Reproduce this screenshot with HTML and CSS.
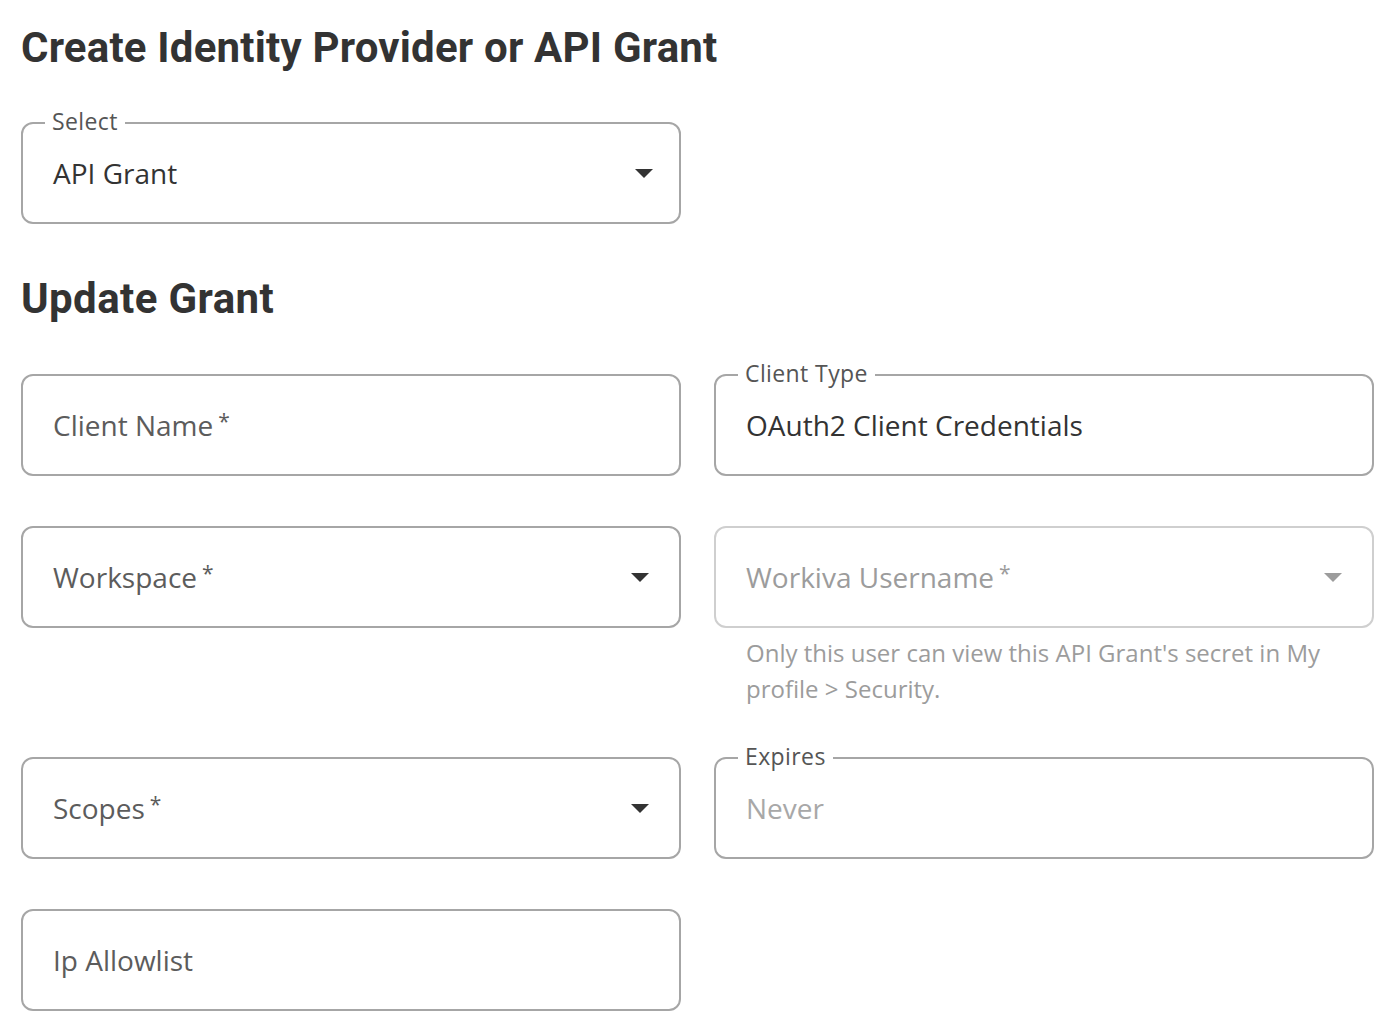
FILE: index.html
```html
<!DOCTYPE html>
<html lang="en">
<head>
<meta charset="utf-8">
<title>Create Identity Provider or API Grant</title>
<link rel="stylesheet" href="styles.css">
</head>
<body>
<main class="page">
  <h1 class="title">Create Identity Provider or API Grant</h1>

  <div class="field field--select field--wide">
    <span class="notch">Select</span>
    <span class="value">API Grant</span>
    <span class="caret"></span>
  </div>

  <h2 class="subtitle">Update Grant</h2>

  <div class="grid">
    <div class="cell">
      <div class="field">
        <span class="placeholder">Client Name<span class="req">*</span></span>
      </div>
    </div>
    <div class="cell">
      <div class="field">
        <span class="notch">Client Type</span>
        <span class="value">OAuth2 Client Credentials</span>
      </div>
    </div>

    <div class="cell">
      <div class="field field--select">
        <span class="placeholder">Workspace<span class="req">*</span></span>
        <span class="caret"></span>
      </div>
    </div>
    <div class="cell">
      <div class="field field--select field--disabled">
        <span class="placeholder">Workiva Username<span class="req">*</span></span>
        <span class="caret"></span>
      </div>
      <p class="helper">Only this user can view this API Grant's secret in My profile &gt; Security.</p>
    </div>

    <div class="cell">
      <div class="field field--select">
        <span class="placeholder">Scopes<span class="req">*</span></span>
        <span class="caret"></span>
      </div>
    </div>
    <div class="cell">
      <div class="field">
        <span class="notch">Expires</span>
        <span class="value value--muted">Never</span>
      </div>
    </div>

    <div class="cell">
      <div class="field">
        <span class="placeholder">Ip Allowlist</span>
      </div>
    </div>
  </div>
</main>
</body>
</html>
```

FILE: styles.css
```css
html, body {
  margin: 0;
  padding: 0;
  background: #ffffff;
}

body {
  font-family: "Open Sans", "Noto Sans", "Liberation Sans", Arial, sans-serif;
  color: #333333;
}

.page {
  padding: 0 19px 0 21px;
}

.title,
.subtitle {
  font-family: Roboto, "Liberation Sans", Arial, sans-serif;
  font-size: 42px;
  line-height: 48px;
  font-weight: 700;
  letter-spacing: 0.2px;
  color: #333333;
}

.title {
  margin: 24px 0 50px;
}

.subtitle {
  margin: 51px 0 51px;
  letter-spacing: 0.4px;
}

.grid {
  display: grid;
  grid-template-columns: 660px 660px;
  column-gap: 33px;
  row-gap: 50px;
}

.field {
  position: relative;
  box-sizing: border-box;
  height: 102px;
  border: 2px solid #a6a6a6;
  border-radius: 12px;
  display: flex;
  align-items: center;
  padding: 0 30px;
  font-size: 28px;
}

.field--wide {
  width: 660px;
}

.field--disabled {
  border-color: #cfcfcf;
}

.notch {
  position: absolute;
  left: 22px;
  top: -16px;
  padding: 0 7px;
  background: #ffffff;
  font-size: 23px;
  line-height: 26px;
  letter-spacing: 0.4px;
  color: #555555;
}

.value {
  color: #333333;
}

.value--muted {
  color: #a8a8a8;
}

.placeholder {
  color: #5c5c5c;
}

.field--disabled .placeholder {
  color: #9c9c9c;
}

.req {
  display: inline-block;
  margin-left: 5px;
  font-size: 21px;
  vertical-align: 7px;
}

.caret {
  margin-left: auto;
  width: 0;
  height: 0;
  border-left: 9px solid transparent;
  border-right: 9px solid transparent;
  border-top: 9px solid #333333;
}

.field--wide .caret {
  margin-right: -4px;
}

.field--disabled .caret {
  border-top-color: #9c9c9c;
}

.helper {
  margin: 7px 0 0;
  padding: 0 30px 0 32px;
  font-size: 24px;
  line-height: 36px;
  color: #9c9c9c;
}
```
